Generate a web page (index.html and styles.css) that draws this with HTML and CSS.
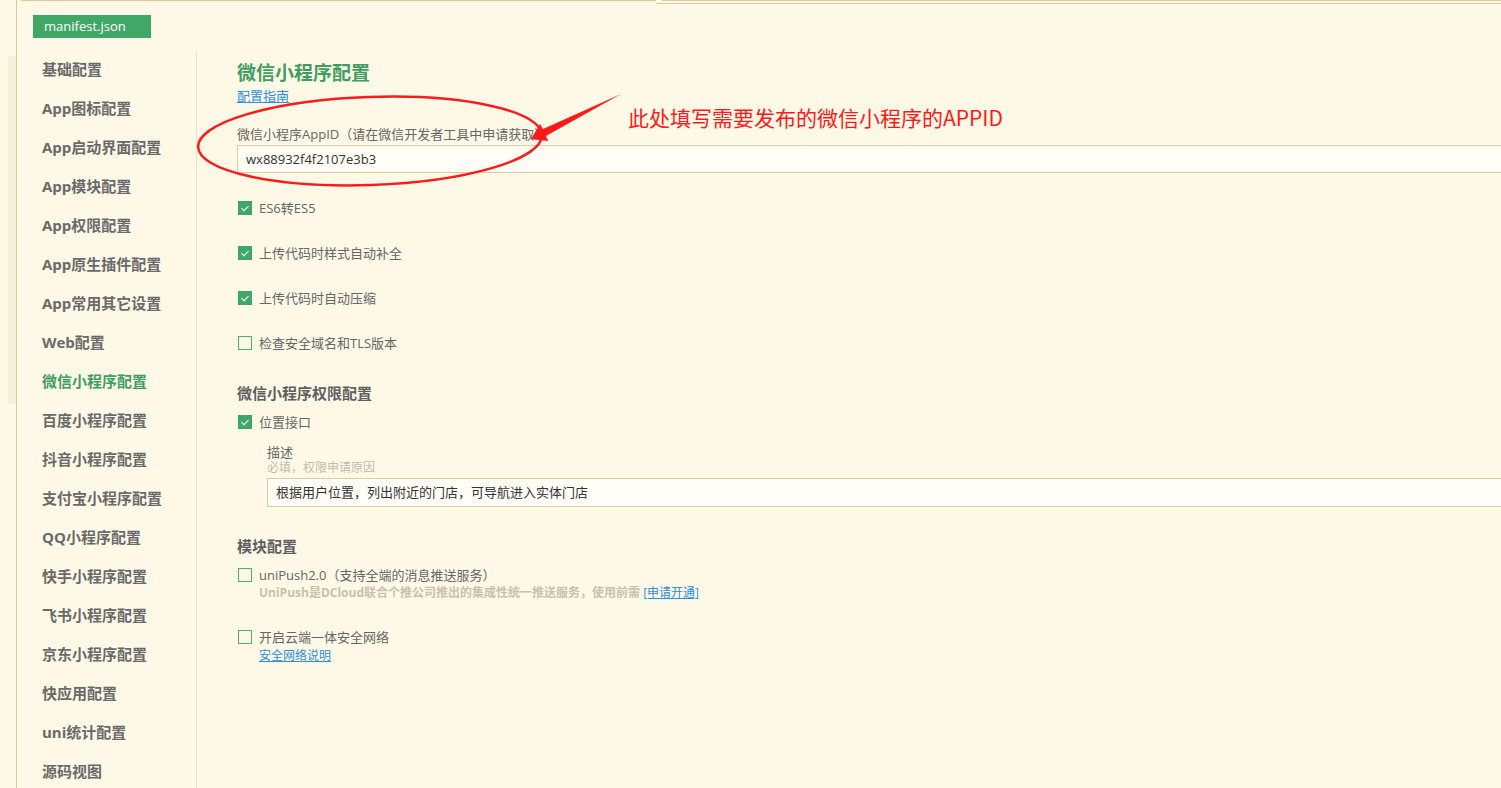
FILE: index.html
```html
<!DOCTYPE html>
<html lang="zh-CN">
<head>
<meta charset="utf-8">
<title>manifest.json</title>
<link rel="stylesheet" href="styles.css">
</head>
<body>
<div class="app">
  <div class="gutter"><div class="gutter-strip"></div></div>
  <div class="editor">
    <div class="topline"><span class="tl-a"></span><span class="tl-gap"></span><span class="tl-b"></span></div>
    <div class="tabbar"><div class="tab">manifest.json</div></div>
    <div class="body">
      <nav class="sidebar">
        <div class="nav-item">基础配置</div>
        <div class="nav-item">App图标配置</div>
        <div class="nav-item">App启动界面配置</div>
        <div class="nav-item">App模块配置</div>
        <div class="nav-item">App权限配置</div>
        <div class="nav-item">App原生插件配置</div>
        <div class="nav-item">App常用其它设置</div>
        <div class="nav-item">Web配置</div>
        <div class="nav-item active">微信小程序配置</div>
        <div class="nav-item">百度小程序配置</div>
        <div class="nav-item">抖音小程序配置</div>
        <div class="nav-item">支付宝小程序配置</div>
        <div class="nav-item">QQ小程序配置</div>
        <div class="nav-item">快手小程序配置</div>
        <div class="nav-item">飞书小程序配置</div>
        <div class="nav-item">京东小程序配置</div>
        <div class="nav-item">快应用配置</div>
        <div class="nav-item">uni统计配置</div>
        <div class="nav-item">源码视图</div>
      </nav>
      <main class="content">
        <h1 class="title">微信小程序配置</h1>
        <a class="link guide">配置指南</a>
        <div class="field-label">微信小程序AppID（请在微信开发者工具中申请获取）</div>
        <div class="input">wx88932f4f2107e3b3</div>

        <div class="check first"><span class="box on"></span><span>ES6转ES5</span></div>
        <div class="check"><span class="box on"></span><span>上传代码时样式自动补全</span></div>
        <div class="check"><span class="box on"></span><span>上传代码时自动压缩</span></div>
        <div class="check"><span class="box"></span><span>检查安全域名和TLS版本</span></div>

        <h2 class="section">微信小程序权限配置</h2>
        <div class="check tight"><span class="box on"></span><span>位置接口</span></div>
        <div class="sub">
          <div class="desc">描述</div>
          <div class="hint">必填，权限申请原因</div>
          <div class="input input2">根据用户位置，列出附近的门店，可导航进入实体门店</div>
        </div>

        <h2 class="section section2">模块配置</h2>
        <div class="check tight"><span class="box"></span><span>uniPush2.0（支持全端的消息推送服务）</span></div>
        <div class="note">UniPush是DCloud联合个推公司推出的集成性统一推送服务，使用前需 <a class="link">[申请开通]</a></div>
        <div class="check after-note"><span class="box"></span><span>开启云端一体安全网络</span></div>
        <div class="note-link"><a class="link">安全网络说明</a></div>
      </main>
    </div>
  </div>
</div>

<svg class="annot" width="1501" height="788" viewBox="0 0 1501 788">
  <ellipse cx="370" cy="141" rx="172" ry="44" transform="rotate(-2 370 141)" fill="none" stroke="#ff1a1a" stroke-width="2.5"/>
  <polygon points="531,139 540,124 543,129 621,94 546,136 548,141" fill="#ff1a1a"/>
</svg>
<div class="annot-text">此处填写需要发布的微信小程序的APPID</div>
</body>
</html>
```

FILE: styles.css
```css
html, body {
  margin: 0;
  padding: 0;
  width: 1501px;
  height: 788px;
  overflow: hidden;
  background: #fef8e7;
  font-family: "Open Sans", "Noto Sans CJK SC", "Microsoft YaHei", sans-serif;
  color: #666;
}

.app {
  display: flex;
  height: 788px;
  position: relative;
}

.gutter {
  width: 16px;
  flex: 0 0 16px;
  border-right: 1px solid #dcc897;
  padding-top: 56px;
  box-sizing: content-box;
}
.gutter-strip {
  margin-left: 8px;
  width: 8px;
  height: 348px;
  background: #f6efd9;
}

.editor {
  flex: 1;
  min-width: 0;
  display: flex;
  flex-direction: column;
  overflow: hidden;
}

.topline {
  display: flex;
  height: 4px;
  flex: 0 0 4px;
  margin-left: 4px;
}
.tl-a {
  width: 635px;
  border-top: 1px solid #dccb9c;
}
.tl-gap {
  width: 6px;
  border-bottom: 1px solid #dccb9c;
}
.tl-b {
  flex: 1;
  border-top: 1px solid #dccb9c;
  border-bottom: 1px solid #dccb9c;
}

.tabbar {
  display: flex;
  align-items: flex-start;
  height: 46px;
  flex: 0 0 46px;
  padding-left: 16px;
  padding-top: 11px;
  box-sizing: border-box;
}
.tab {
  width: 118px;
  height: 23px;
  line-height: 22px;
  background: #40a866;
  color: #fff;
  font-size: 13px;
  padding-left: 11px;
  box-sizing: border-box;
}

.body {
  display: flex;
  flex: 1;
  min-height: 0;
}

.sidebar {
  width: 179px;
  flex: 0 0 179px;
  border-right: 1px solid #efe4c4;
}
.nav-item {
  height: 39px;
  line-height: 39px;
  padding-left: 25px;
  font-size: 15px;
  font-weight: 700;
  color: #6a6a6a;
  white-space: nowrap;
}
.nav-item.active {
  color: #3d9e5f;
}

.content {
  flex: 1;
  min-width: 0;
  padding-left: 40px;
  padding-top: 11px;
  overflow: hidden;
}

.title {
  margin: 0;
  font-size: 19px;
  line-height: 24px;
  font-weight: 700;
  color: #3f9e5f;
}

.link {
  color: #2d8fe0;
  text-decoration: underline;
  cursor: pointer;
}
.guide {
  display: block;
  margin-top: 2px;
  font-size: 13px;
  line-height: 18px;
  width: max-content;
}

.field-label {
  margin-top: 20px;
  font-size: 13px;
  line-height: 18px;
  color: #666;
  white-space: nowrap;
}

.input {
  margin-top: 2px;
  width: 1400px;
  height: 28px;
  line-height: 26px;
  box-sizing: border-box;
  border: 1px solid #d9cda2;
  border-right: none;
  background: #fffdf6;
  padding-left: 8px;
  font-size: 13px;
  color: #333;
  white-space: nowrap;
}

.check {
  display: flex;
  align-items: center;
  gap: 7px;
  height: 18px;
  margin-top: 27px;
  font-size: 13px;
  line-height: 18px;
  color: #666;
  white-space: nowrap;
}
.check.first { margin-top: 26px; }
.check.tight { margin-top: 11px; }
.check.after-note { margin-top: 27px; }

.box {
  width: 14px;
  height: 14px;
  margin-left: 1px;
  box-sizing: border-box;
  border: 1px solid #4fae70;
  flex: 0 0 14px;
  position: relative;
}
.box.on {
  background: #40a866;
  border-color: #40a866;
}
.box.on::after {
  content: "";
  position: absolute;
  left: 4px;
  top: 2px;
  width: 3px;
  height: 6px;
  border-right: 1.5px solid #fff;
  border-bottom: 1.5px solid #fff;
  transform: rotate(45deg);
}

.section {
  margin: 32px 0 0;
  font-size: 15px;
  line-height: 18px;
  font-weight: 700;
  color: #5f5f5f;
}
.section2 { margin-top: 30px; }

.sub {
  padding-left: 30px;
  margin-top: 13px;
}
.desc {
  font-size: 13px;
  line-height: 16px;
  color: #666;
}
.hint {
  font-size: 12px;
  line-height: 16px;
  color: #c2bcaa;
}
.input2 {
  margin-top: 2px;
  height: 29px;
  line-height: 27px;
}

.note {
  margin-top: 1px;
  padding-left: 22px;
  font-size: 12px;
  line-height: 16px;
  font-weight: 700;
  color: #c8c1ac;
  white-space: nowrap;
}
.note .link { font-weight: 400; }

.note-link {
  margin-top: 2px;
  padding-left: 22px;
  font-size: 12px;
  line-height: 16px;
}

.annot {
  position: absolute;
  left: 0;
  top: 0;
  pointer-events: none;
}
.annot-text {
  position: absolute;
  left: 628px;
  top: 103px;
  font-family: "Noto Sans CJK SC", sans-serif;
  font-size: 21px;
  line-height: 28px;
  color: #ff1a1a;
  white-space: nowrap;
  pointer-events: none;
}
```
